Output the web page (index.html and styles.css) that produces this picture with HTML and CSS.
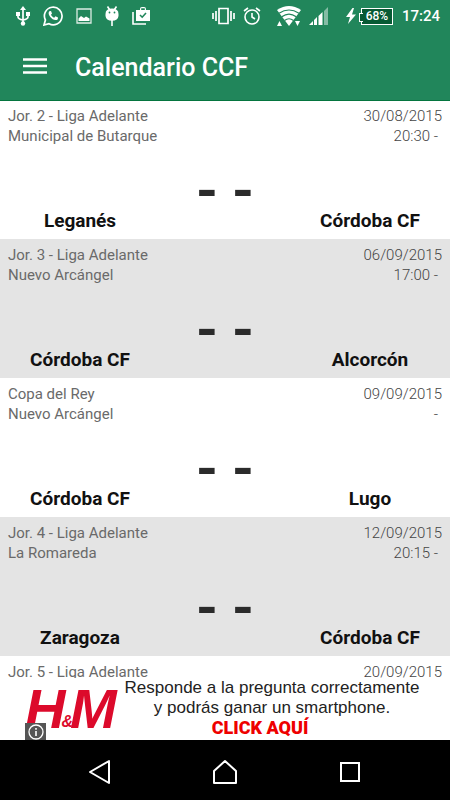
FILE: index.html
```html
<!DOCTYPE html>
<html lang="es">
<head>
<meta charset="utf-8">
<meta name="viewport" content="width=device-width, initial-scale=1">
<title>Calendario CCF</title>
<link rel="stylesheet" href="styles.css">
</head>
<body>
<header class="top">
  <div class="status">
    <div class="status-left">
      <svg width="14" height="20" viewBox="0 0 14 20" fill="none" stroke="#fff" stroke-width="1.7"><path d="M7 3v14M2 7v4q0 2 5 3M12 7v4q0 2-5 3"/><g fill="#fff" stroke="none"><path d="M7 0l3 4H4zM0 6h4v4H0zM10 6h4v4h-4z"/><circle cx="7" cy="17.500" r="2.200"/></g></svg>
      <svg width="20" height="20" viewBox="0 0 20 20" fill="none" stroke="#fff" stroke-width="1.700"><path d="M1 19l1.400-5A8.800 8.800 0 1 1 6 17.700z"/><path d="M6.300 5.200c-3 3.600 5 11.500 8.500 8l.2-1.700-2.500-1.300-1.300 1.500c-1.500-.6-2.500-1.700-3.200-3L9 7.500 8 5z" fill="#fff" stroke="none"/></svg>
      <svg width="16" height="16" viewBox="0 0 16 16"><path d="M1 1h14v14H1z" fill="none" stroke="#dcebe4" stroke-width="1.300"/><path d="M2.500 13V10.500L5 8l3 2 2-1.500 3.500 2V13z" fill="#fff"/></svg>
      <svg width="14" height="20" viewBox="0 0 14 20" fill="#fff"><path d="M2.500.5l2 3M11.500.5l-2 3M7 14v6" stroke="#fff" stroke-width="1.600"/><path d="M.5 8q0-5.500 6.500-5.500T13.500 8v2q-.5 4.800-6.500 4.800T.5 10z"/><circle cx="4.500" cy="6.500" r=".9" fill="#21865b"/><circle cx="9.500" cy="6.500" r=".9" fill="#21865b"/></svg>
      <svg width="18" height="18" viewBox="0 0 18 18"><path d="M1 5v12h13" fill="none" stroke="#fff" stroke-width="1.600"/><path d="M4 3h4V2q0-2 2-2h2q2 0 2 2v1h4v11H4zM9.200 3h3.600V1.300H9.200z" fill="#fff" fill-rule="evenodd"/><path d="M8 8l2.200 2.200L14 6" fill="none" stroke="#21865b" stroke-width="1.600"/></svg>
    </div>
    <div class="status-right">
      <svg width="23" height="18" viewBox="0 0 23 18" fill="none" stroke="#fff" stroke-width="1.700"><path d="M7 1.500h9v15H7zM4 4v10M19 4v10M1 6v6M22 6v6"/></svg>
      <svg class="alarm" width="18" height="18" viewBox="0 0 18 18" fill="none" stroke="#fff" stroke-width="1.600"><circle cx="9" cy="10" r="7"/><path d="M9 6v4l3 2M1 4l4-3M17 4l-4-3"/></svg>
      <svg class="wifi" width="24" height="20" viewBox="0 0 24 20"><path d="M0 4Q12-4 24 4L12 20z" fill="#fff"/><path d="M2 7.200Q12 .8 22 7.200M4.800 10.800Q12 5.500 19.200 10.800M7.500 14.500Q12 11 16.500 14.500" fill="none" stroke="#21865b" stroke-width="1.200"/><path d="M0 20l2.500-5L5 20zM18 15h5l-2.500 5z" fill="#fff"/></svg>
      <svg class="signal" width="19" height="18" viewBox="0 0 19 18" fill="#fff"><path d="M0 18l4-4v4zM5 13l3-3v8H5zM9.500 9l4-4v13h-4z"/><path d="M15 4l4-4v18h-4z" opacity=".45"/></svg>
      <svg class="bolt" width="10" height="16" viewBox="0 0 10 16" fill="#fff"><path d="M6.500 0L0 9h4l-2 7 8-9.500H6L8 0z"/></svg>
      <span class="battery">68%</span>
      <time class="clock">17:24</time>
    </div>
  </div>
  <div class="toolbar">
    <button class="menu" aria-label="Menú"><svg width="24" height="18" viewBox="0 0 24 18" stroke="#fff" stroke-width="2.500"><path d="M0 2.500h24M0 9h24M0 15.500h24"/></svg></button>
    <h1 class="title">Calendario CCF</h1>
  </div>
</header>

<main class="matches">
  <article class="match">
    <div class="info"><span>Jor. 2 - Liga Adelante</span><span class="when">30/08/2015</span></div>
    <div class="info"><span>Municipal de Butarque</span><span class="when hour">20:30 -</span></div>
    <div class="score"><span>-</span><span>-</span></div>
    <div class="teams"><h2>Leganés</h2><h2>Córdoba CF</h2></div>
  </article>
  <article class="match">
    <div class="info"><span>Jor. 3 - Liga Adelante</span><span class="when">06/09/2015</span></div>
    <div class="info"><span>Nuevo Arcángel</span><span class="when hour">17:00 -</span></div>
    <div class="score"><span>-</span><span>-</span></div>
    <div class="teams"><h2>Córdoba CF</h2><h2>Alcorcón</h2></div>
  </article>
  <article class="match">
    <div class="info"><span>Copa del Rey</span><span class="when">09/09/2015</span></div>
    <div class="info"><span>Nuevo Arcángel</span><span class="when hour">-</span></div>
    <div class="score"><span>-</span><span>-</span></div>
    <div class="teams"><h2>Córdoba CF</h2><h2>Lugo</h2></div>
  </article>
  <article class="match">
    <div class="info"><span>Jor. 4 - Liga Adelante</span><span class="when">12/09/2015</span></div>
    <div class="info"><span>La Romareda</span><span class="when hour">20:15 -</span></div>
    <div class="score"><span>-</span><span>-</span></div>
    <div class="teams"><h2>Zaragoza</h2><h2>Córdoba CF</h2></div>
  </article>
  <article class="match">
    <div class="info"><span>Jor. 5 - Liga Adelante</span><span class="when">20/09/2015</span></div>
  </article>
</main>

<footer class="bottom">
  <div class="ad">
    <div class="brand"><span>H</span><span class="amp">&amp;</span><span>M</span></div>
    <div class="ad-text">
      <p>Responde a la pregunta correctamente</p>
      <p>y podrás ganar un smartphone.</p>
      <a href="#">CLICK AQUÍ</a>
    </div>
    <button class="ad-info" aria-label="Información del anuncio"><svg width="16" height="16" viewBox="0 0 16 16" fill="none" stroke="#fff"><circle cx="8" cy="8" r="7" stroke-width="1.300"/><path d="M8 7v5M8 4v1.700" stroke-width="1.600"/></svg></button>
  </div>
  <nav class="nav">
    <button aria-label="Atrás"><svg width="26" height="26" viewBox="0 0 26 26" fill="none" stroke="#fff" stroke-width="2" stroke-linejoin="round"><path d="M22 2v22L3 13z"/></svg></button>
    <button aria-label="Inicio"><svg width="26" height="26" viewBox="0 0 26 26" fill="none" stroke="#fff" stroke-width="2" stroke-linejoin="round"><path d="M2 24V12L13 2l11 10v12z"/></svg></button>
    <button aria-label="Recientes"><svg width="26" height="26" viewBox="0 0 26 26" fill="none" stroke="#fff" stroke-width="2"><path d="M4 4h18v18H4z"/></svg></button>
  </nav>
</footer>
</body>
</html>
```
FILE: styles.css
```css
* {
  box-sizing: border-box;
}

body {
  margin: 0;
  height: 100vh;
  display: flex;
  flex-direction: column;
  overflow: hidden;
  font-family: Roboto, "Liberation Sans", sans-serif;
  background: #fff;
}

button {
  border: 0;
  padding: 0;
  background: none;
  display: grid;
  place-items: center;
}

svg {
  display: block;
  flex: none;
}

h1,
h2,
p {
  margin: 0;
}

.top {
  position: relative;
  flex: none;
  margin-bottom: -1px;
  background: #21865b;
  border-bottom: 1px solid #04753f;
  color: #fff;
}

.status {
  display: flex;
  justify-content: space-between;
  align-items: center;
  height: 32px;
  padding: 0 10px 0 16px;
}

.status-left,
.status-right {
  display: flex;
  align-items: center;
}

.status-left {
  gap: 13px;
}

.alarm {
  margin-left: 8px;
}

.wifi {
  margin-left: 16px;
}

.signal {
  margin-left: 8px;
}

.bolt {
  margin-left: 18px;
}

.battery {
  position: relative;
  margin-left: 5px;
  width: 32px;
  border: 1px solid #fff;
  background: #075a34;
  font-size: 12px;
  font-weight: 500;
  line-height: 15px;
  text-align: center;
}

.battery::before {
  content: "";
  position: absolute;
  left: -3px;
  top: 4px;
  width: 3px;
  height: 7px;
  border: 1px solid #fff;
  border-right: 0;
  background: #075a34;
}

.clock {
  margin-left: 9px;
  font-size: 15px;
  font-weight: 500;
  line-height: 20px;
}

.toolbar {
  display: flex;
  align-items: center;
  gap: 28px;
  height: 68px;
  padding: 0 23px;
}

.title {
  padding-top: 3px;
  font-size: 25px;
  font-weight: 500;
  line-height: 32px;
}

.matches {
  flex: 1;
  min-height: 0;
  overflow: hidden;
}

.match {
  padding: 6px 8px 8px;
  background: #fff;
}

.match:nth-child(even) {
  background: #e4e4e4;
}

.info {
  display: flex;
  justify-content: space-between;
  font-size: 15px;
  line-height: 20px;
  color: #6a6a6a;
}

.when {
  font-weight: 300;
  color: #444;
}

.hour {
  padding-right: 4px;
}

.score {
  display: flex;
  justify-content: center;
  gap: 14px;
  padding-top: 25px;
  font-size: 56px;
  font-weight: 700;
  line-height: 40px;
  color: #2b2b2b;
}

.teams {
  display: flex;
  justify-content: space-between;
}

.teams h2 {
  width: 144px;
  font-size: 19px;
  font-weight: 700;
  line-height: 20px;
  text-align: center;
  color: #111;
}

.bottom {
  flex: none;
}

.ad {
  position: relative;
  display: flex;
  height: 62px;
  padding-left: 25px;
  background: #fff;
  overflow: hidden;
}

.brand {
  display: flex;
  align-items: center;
  width: 94px;
  font-family: "Liberation Sans", sans-serif;
  font-size: 56px;
  font-weight: 700;
  font-style: italic;
  line-height: 62px;
  color: #dc0a2b;
}

.amp {
  align-self: flex-end;
  margin: 0 -3px 0 -4px;
  font-size: 16px;
  line-height: 36px;
}

.ad-text {
  width: 306px;
  text-align: center;
  font-family: "Liberation Sans", sans-serif;
  font-size: 17px;
  line-height: 20px;
  color: #222;
  white-space: nowrap;
}

.ad-text a {
  display: block;
  padding-right: 24px;
  font-family: Roboto, sans-serif;
  font-size: 18px;
  font-weight: 900;
  color: #ee0000;
  text-decoration: none;
}

.ad-info {
  position: absolute;
  left: 25px;
  bottom: 0;
  width: 21px;
  height: 17px;
  background: #555;
}

.nav {
  display: flex;
  justify-content: center;
  align-items: center;
  gap: 99px;
  height: 60px;
  padding-top: 4px;
  background: #000;
}
```
